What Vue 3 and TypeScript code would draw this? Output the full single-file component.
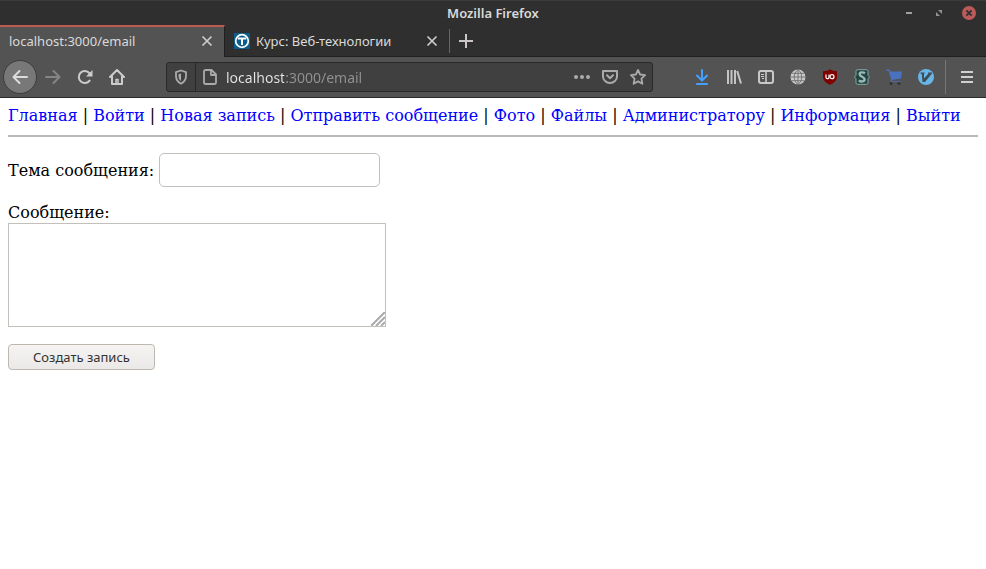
<script setup lang="ts">
import { ref } from 'vue'

interface NavLink {
  text: string
  href: string
}

const links: NavLink[] = [
  { text: 'Главная', href: '/' },
  { text: 'Войти', href: '/login' },
  { text: 'Новая запись', href: '/new' },
  { text: 'Отправить сообщение', href: '/email' },
  { text: 'Фото', href: '/photo' },
  { text: 'Файлы', href: '/files' },
  { text: 'Администратору', href: '/admin' },
  { text: 'Информация', href: '/info' },
  { text: 'Выйти', href: '/logout' },
]

const address = ref('localhost:3000/email')
const subject = ref('')
const message = ref('')
</script>

<template>
  <div class="window">
    <header class="chrome">
      <div class="titlebar">
        <span class="title">Mozilla Firefox</span>
        <div class="window-controls">
          <button type="button" aria-label="Свернуть">
            <svg width="16" height="16" viewBox="0 0 16 16"><path d="M5 8h6" stroke="#a0a0a0" stroke-width="2" /></svg>
          </button>
          <button type="button" aria-label="Развернуть">
            <svg width="16" height="16" viewBox="0 0 16 16" fill="#929292"><path d="M7 5h4v4zM5 7v4h4z" /></svg>
          </button>
          <button type="button" aria-label="Закрыть">
            <svg width="16" height="16" viewBox="0 0 16 16">
              <circle cx="8" cy="8" r="7" fill="#bd5a59" />
              <path d="M5.4 5.4l5.2 5.2M10.6 5.4l-5.2 5.2" stroke="#333" stroke-width="2" />
            </svg>
          </button>
        </div>
      </div>

      <div class="tabs">
        <div class="tab active">
          <span class="tab-label">localhost:3000/email</span>
          <button type="button" aria-label="Закрыть вкладку">
            <svg width="16" height="16" viewBox="0 0 16 16"><path d="M3.5 3.5l9 9M12.5 3.5l-9 9" stroke="#ccc" stroke-width="1.7" /></svg>
          </button>
        </div>
        <div class="tab">
          <svg width="16" height="16" viewBox="0 0 16 16">
            <path d="M0 0h16v16H0z" fill="#0b5d8b" />
            <circle cx="8" cy="8" r="6.3" fill="none" stroke="#fff" stroke-width="1.7" />
            <path d="M3.8 5.4h8.4M8 5.4V12" stroke="#fff" stroke-width="2" />
          </svg>
          <span class="tab-label">Курс: Веб-технологии</span>
          <button type="button" aria-label="Закрыть вкладку">
            <svg width="16" height="16" viewBox="0 0 16 16"><path d="M3.5 3.5l9 9M12.5 3.5l-9 9" stroke="#ccc" stroke-width="1.7" /></svg>
          </button>
        </div>
        <div class="new-tab">
          <button type="button" aria-label="Новая вкладка">
            <svg width="16" height="16" viewBox="0 0 16 16"><path d="M8 1v14M1 8h14" stroke="#cbc5c5" stroke-width="2" /></svg>
          </button>
        </div>
      </div>

      <div class="toolbar">
        <div class="tools">
          <button type="button" class="back" aria-label="Назад">
            <svg width="16" height="16" viewBox="0 0 16 16" fill="none" stroke="#dcdcdc" stroke-width="2" stroke-linecap="round" stroke-linejoin="round"><path d="M15 8H1.5M7.5 2l-6 6 6 6" /></svg>
          </button>
          <button type="button" aria-label="Вперёд">
            <svg width="16" height="16" viewBox="0 0 16 16" fill="none" stroke="#858585" stroke-width="2" stroke-linecap="round" stroke-linejoin="round"><path d="M1 8h13.5M8.5 2l6 6-6 6" /></svg>
          </button>
          <button type="button" aria-label="Обновить">
            <svg width="16" height="16" viewBox="0 0 16 16"><path d="M12.600 11.600A6 6 0 1 1 12.300 4" fill="none" stroke="#ccc" stroke-width="2" stroke-linecap="round" /><path d="M15.500 1v6.500H9z" fill="#ccc" /></svg>
          </button>
          <button type="button" aria-label="Домой">
            <svg width="16" height="16" viewBox="0 0 16 16" fill="none" stroke="#ccc" stroke-width="2" stroke-linecap="round" stroke-linejoin="round"><path d="M1 8l7-7 7 7M3 7.500V15h10V7.500" /><path d="M7 14V10.500h2V14" stroke-width="1.500" /></svg>
          </button>
        </div>

        <div class="address">
          <button type="button" class="shield" aria-label="Защита">
            <svg width="16" height="16" viewBox="0 0 16 16"><path d="M8 1.500l5 1.600v4c0 3.500-1.700 6-5 7.600-3.300-1.600-5-4.100-5-7.600v-4z" fill="none" stroke="#aaa" stroke-width="1.800" stroke-linejoin="round" /><path d="M8 4.500v7.400C6.400 10.800 5.500 9.300 5.500 7V5.200z" fill="#aaa" /></svg>
          </button>
          <svg class="page-icon" width="16" height="16" viewBox="0 0 16 16" fill="none" stroke="#aaa" stroke-width="1.800" stroke-linejoin="round"><path d="M3.500 1h6L14 5.500V13.500a1.500 1.500 0 0 1-1.500 1.500h-9A1.500 1.500 0 0 1 2 13.500v-11A1.500 1.500 0 0 1 3.500 1zM9 1v5h5" /></svg>
          <input v-model="address" type="text" aria-label="Адрес" spellcheck="false" />
          <button type="button" aria-label="Действия">
            <svg width="16" height="16" viewBox="0 0 16 16" fill="#aaa"><circle cx="2" cy="8" r="2" /><circle cx="8" cy="8" r="2" /><circle cx="14" cy="8" r="2" /></svg>
          </button>
          <button type="button" aria-label="Pocket">
            <svg width="16" height="16" viewBox="0 0 16 16" fill="none" stroke="#aaa" stroke-width="2" stroke-linecap="round" stroke-linejoin="round"><path d="M1 2h14v5.500a7 6.500 0 0 1-14 0z" /><path d="M5 6.300l3 3 3-3" /></svg>
          </button>
          <button type="button" aria-label="В закладки">
            <svg width="16" height="16" viewBox="0 0 16 16" fill="none" stroke="#aaa" stroke-width="1.800" stroke-linejoin="round"><path d="M8 1l2.100 4.500 5 .6-3.700 3.500 1 5.200L8 12.400l-4.400 2.400 1-5.200L.9 6.100l5-.6z" /></svg>
          </button>
        </div>

        <div class="tools">
          <button type="button" aria-label="Загрузки">
            <svg width="16" height="16" viewBox="0 0 16 16" fill="none" stroke="#45a1ff" stroke-width="2" stroke-linecap="round" stroke-linejoin="round"><path d="M8 1v10M3 6.500l5 5 5-5M3 15h10" /></svg>
          </button>
          <button type="button" aria-label="Библиотека">
            <svg width="16" height="16" viewBox="0 0 16 16" fill="none" stroke="#c4c4c4" stroke-width="2"><path d="M2 1v14M5.500 1v14M9 1v14M11.200 2l3.800 12.500" /></svg>
          </button>
          <button type="button" aria-label="Боковая панель">
            <svg width="16" height="16" viewBox="0 0 16 16" fill="none" stroke="#c8c8c8"><rect x="1" y="2" width="14" height="12" rx="2" stroke-width="2" /><path d="M8 2v12" stroke-width="1.600" /><path d="M3 5.500h3M3 7.500h3M4 9.500h2" /></svg>
          </button>
          <button type="button" aria-label="Язык">
            <svg width="16" height="16" viewBox="0 0 16 16"><circle cx="8" cy="8" r="7.500" fill="#c9c9c9" /><path d="M8 0v16M0 8h16M2 4.300h12M2 11.700h12M8 .5c-5 4-5 11 0 15M8 .5c5 4 5 11 0 15" fill="none" stroke="#666" stroke-width=".8" /></svg>
          </button>
          <button type="button" aria-label="uBlock Origin">
            <svg width="16" height="16" viewBox="0 0 16 16"><path d="M8 .3c2 1.400 4.500 1.800 7 2v5c0 4-2.500 6.500-7 8.500-4.500-2-7-4.500-7-8.500v-5c2.500-.2 5-.6 7-2z" fill="#800000" /><path d="M4 5.500v2.700a1.500 1.500 0 0 0 3 0V5.500" fill="none" stroke="#fff" stroke-width="1.200" /><circle cx="10" cy="7.700" r="2" fill="none" stroke="#fff" stroke-width="1.200" /></svg>
          </button>
          <button type="button" aria-label="Stylus">
            <svg width="16" height="16" viewBox="0 0 16 16"><path d="M3.500.7h9A1.500 1.500 0 0 1 14 2.200v4L15.500 8 14 9.800v4a1.500 1.500 0 0 1-1.500 1.500h-9A1.500 1.500 0 0 1 2 13.800v-4L.5 8 2 6.200v-4A1.500 1.500 0 0 1 3.500.7z" fill="#224444" stroke="#86a8a2" /><path d="M11 4.300C9 2.900 5.600 3 5.600 5.300c0 2.600 5 2.300 5 5 0 2.500-3.600 2.700-5.800 1.200" fill="none" stroke="#9abab2" stroke-width="2.400" /></svg>
          </button>
          <button type="button" aria-label="Покупки">
            <svg width="16" height="16" viewBox="0 0 16 16"><path d="M0 .5h3.500l1 2H16l-1 7-9 1.500v1h9v.8H4.500L5 10 2.700 2H.5z" fill="#4a70c0" /><circle cx="5" cy="14.500" r="1.500" fill="#333" /><circle cx="13" cy="14.500" r="1.500" fill="#333" /></svg>
          </button>
          <button type="button" aria-label="Vimium">
            <svg width="16" height="16" viewBox="0 0 16 16"><circle cx="8" cy="8" r="8" fill="#68b5e8" /><path d="M2.500 3.500h4v1L6 5v4.500l4.500-5-.5-.3v-.7h4v1L7 13H4.500L3.800 5l-1.300-.5z" fill="#414b52" /></svg>
          </button>
        </div>
        <button type="button" class="menu" aria-label="Меню">
          <svg width="16" height="16" viewBox="0 0 16 16"><path d="M2 3h12M2 8h12M2 13h12" stroke="#d0d0d0" stroke-width="2" /></svg>
        </button>
      </div>
    </header>

    <main>
      <nav>
        <template v-for="(link, i) in links" :key="link.href"><span v-if="i > 0"> | </span><a :href="link.href">{{ link.text }}</a></template>
      </nav>
      <hr />
      <form @submit.prevent>
        <div class="subject">
          <label for="subject">Тема сообщения:</label>
          <input id="subject" v-model="subject" type="text" />
        </div>
        <div class="message">
          <label for="message">Сообщение:</label>
          <div class="area">
            <textarea id="message" v-model="message"></textarea>
            <svg class="grip" width="14" height="14" viewBox="0 0 14 14" fill="none" stroke="#aaa" stroke-width="2"><path d="M0 14L14 0M5 14l9-9M10 14l4-4" /></svg>
          </div>
        </div>
        <button type="submit" class="submit">Создать запись</button>
      </form>
    </main>
  </div>
</template>

<style>
body {
  margin: 0;
  background: #fff;
}
</style>

<style scoped>
.window {
  min-height: 100vh;
  background: #fff;
}

button,
input,
textarea {
  box-sizing: border-box;
  margin: 0;
  font-family: 'Noto Sans', sans-serif;
}

svg {
  display: block;
  flex: none;
}

.chrome {
  background: #2f2f2f;
  color: #dadada;
  font-family: 'Noto Sans', sans-serif;
  font-size: 13px;
}

.chrome button {
  display: flex;
  align-items: center;
  justify-content: center;
  flex: none;
  padding: 0;
  border: 0;
  background: none;
}

.titlebar {
  display: grid;
  grid-template-columns: 1fr auto 1fr;
  align-items: center;
  box-sizing: border-box;
  height: 25px;
  border-top: 1px solid #3b3b3b;
}

.title {
  grid-column: 2;
  font-weight: 600;
  line-height: 24px;
}

.window-controls {
  display: flex;
  justify-content: flex-end;
  padding-right: 2px;
}

.window-controls button {
  width: 30px;
  height: 22px;
}

.tabs {
  display: flex;
  height: 32px;
}

.tab {
  display: flex;
  align-items: center;
  gap: 6px;
  box-sizing: border-box;
  width: 224px;
  padding: 0 9px;
  border-bottom: 1px solid #1f1f1f;
}

.tab.active {
  width: 225px;
  border-top: 2px solid #bd5a52;
  border-right: 1px solid #1f1f1f;
  border-bottom: 0;
  padding-bottom: 2px;
  background: #535353;
}

.tab-label {
  flex: 1;
  white-space: nowrap;
}

.new-tab {
  display: flex;
  flex: 1;
  align-items: center;
  border-bottom: 1px solid #1f1f1f;
}

.new-tab button {
  width: 32px;
  height: 24px;
  border-left: 1px solid #666;
}

.toolbar {
  display: flex;
  align-items: center;
  box-sizing: border-box;
  height: 41px;
  padding: 0 3px;
  border-bottom: 1px solid #292929;
  background: #535353;
}

.tools {
  display: flex;
  align-items: center;
}

.tools button {
  width: 32px;
  height: 32px;
}

.tools .back {
  width: 34px;
  height: 34px;
  border: 1px solid #3c3c3c;
  border-radius: 50%;
  background: #787878;
}

.address {
  display: flex;
  flex: 1;
  align-items: center;
  box-sizing: border-box;
  min-width: 0;
  height: 30px;
  margin: 0 33px;
  border: 1px solid #292929;
  border-radius: 3px;
  background: #404040;
}

.address button {
  width: 28px;
  height: 28px;
}

.address .shield {
  width: 29px;
  height: 28px;
  border-right: 1px solid #292929;
}

.page-icon {
  margin: 0 8px 0 6px;
}

.address input {
  flex: 1;
  min-width: 0;
  height: 28px;
  padding: 0;
  border: 0;
  outline: 0;
  background: linear-gradient(90deg, #e6e6e6 58px, #929292 58px);
  background-clip: text;
  color: transparent;
  caret-color: #e6e6e6;
  font-size: 14px;
}

.chrome .menu {
  width: 38px;
  height: 34px;
  margin-left: 3px;
  padding-left: 4px;
  border-left: 1px solid #767676;
}

main {
  padding: 8px;
  color: #000;
  font-family: 'DejaVu Serif', serif;
  font-size: 16px;
  line-height: 19px;
}

a {
  color: #00f;
  text-decoration: none;
}

span {
  white-space: pre-wrap;
}

hr {
  height: 2px;
  margin: 10px 0 16px;
  border: 0;
  background: #b9b9b9;
}

form {
  display: flex;
  flex-direction: column;
  align-items: flex-start;
  gap: 16px;
}

.subject {
  display: flex;
  align-items: center;
  gap: 5px;
}

.subject input {
  width: 221px;
  height: 34px;
  padding: 0 8px;
  border: 1px solid #c3bfba;
  border-radius: 5px;
  background: #fff;
  font-size: 13px;
}

.message {
  display: grid;
  gap: 1px;
}

.area {
  position: relative;
  padding-bottom: 1px;
}

textarea {
  display: block;
  width: 378px;
  height: 104px;
  padding: 2px;
  border: 1px solid #c3bfba;
  background: #fff;
  font-size: 13px;
  resize: none;
}

.grip {
  position: absolute;
  right: 1px;
  bottom: 2px;
}

.submit {
  height: 26px;
  padding: 0 24px;
  border: 1px solid #bfb8b1;
  border-radius: 4px;
  background: linear-gradient(#f5f4f3, #eae9e7);
  color: #333;
  font-size: 13px;
}
</style>
